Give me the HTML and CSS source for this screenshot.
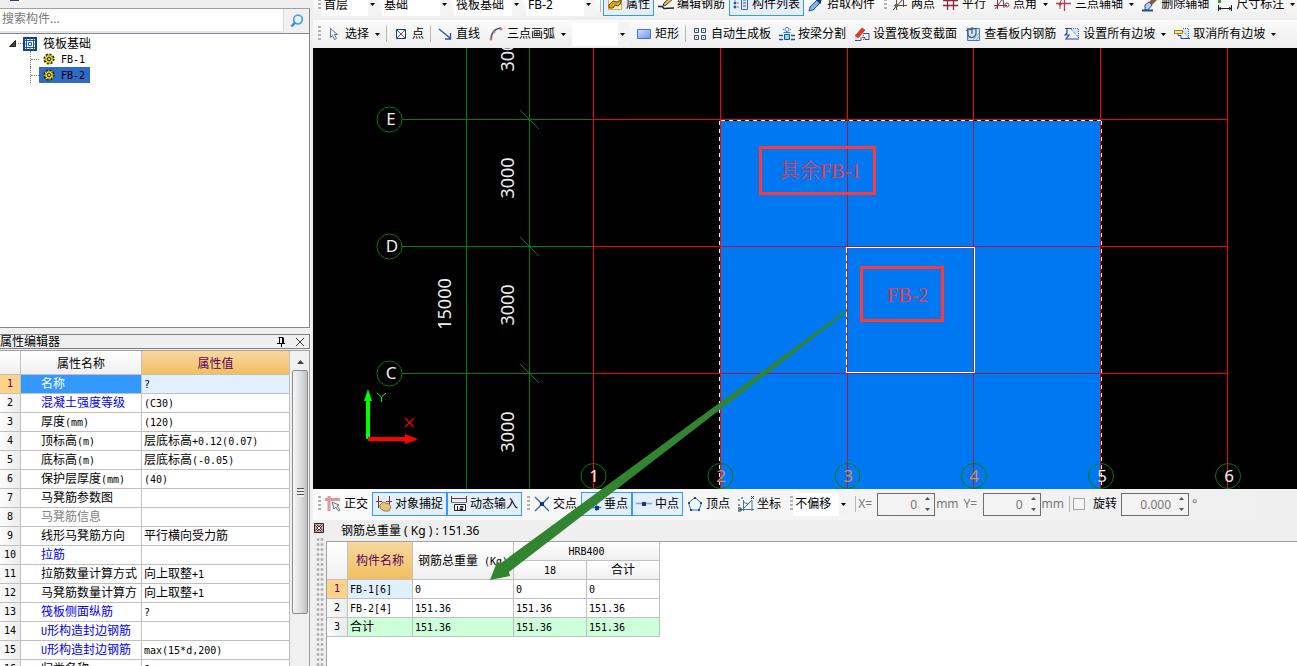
FILE: index.html
```html
<!DOCTYPE html>
<html lang="zh-CN">
<head>
<meta charset="utf-8">
<title>筏板基础</title>
<link rel="stylesheet" href="styles.css">
</head>
<body>
<svg class="defs" aria-hidden="true">
  <defs>
    <linearGradient id="blue" x1="0" y1="0" x2="1" y2="1"><stop offset="0" stop-color="#d3e2ff"/><stop offset="1" stop-color="#6d93e8"/></linearGradient>
    <symbol id="arrow" viewBox="0 0 5 3"><path d="M0 0h5L2.500 3z"/></symbol>
    <symbol id="gear" viewBox="0 0 12 12"><circle cx="6" cy="6" r="4.600" fill="#ffeb00" stroke="#222" stroke-width="2" stroke-dasharray="2 1.600"/><circle cx="6" cy="6" r="3.700" fill="#ffeb00"/><path d="M6 1v10M1 6h10M2.500 2.500l7 7M9.500 2.500l-7 7" stroke="#6c6400" stroke-width=".7"/><circle cx="6" cy="6" r="1.500" fill="#fff" stroke="#222"/></symbol>
  </defs>
</svg>
<div class="app">
  <aside class="side">
    <div class="side-top"><span class="tab-stub"></span></div>
    <form class="search">
      <input type="text" placeholder="搜索构件..." aria-label="搜索构件">
      <button type="button" aria-label="搜索"><svg width="14" height="14" viewBox="0 0 14 14"><circle cx="8" cy="5.500" r="4.300" fill="#eaf6ff" stroke="#4aa3e8" stroke-width="1.800"/><path d="M5 8.500L1.500 12.500" stroke="#3b8fd6" stroke-width="2.600"/></svg></button>
    </form>
    <div class="tree">
      <div class="node root">
        <svg class="twist" width="7" height="7" viewBox="0 0 7 7"><path d="M6.500 .5v6h-6z" fill="#444" stroke="#222"/></svg><i class="dots"></i>
        <svg width="14" height="14" viewBox="0 0 14 14"><path fill="#fff" stroke="#123f87" stroke-width="2" d="M1 1h12v12H1z"/><path d="M1 3.500h12M1 10.500h12M3.500 1v12M10.500 1v12M7 1v3M7 10v3M1 7h3M10 7h3M5.500 5.500h3v3h-3z" fill="none" stroke="#1c56a8"/></svg>
        <span>筏板基础</span>
      </div>
      <ul>
        <li><i class="dots"></i><span class="node leaf"><svg width="12" height="12"><use href="#gear"/></svg><span>FB-1</span></span></li>
        <li><i class="dots"></i><span class="node leaf on"><svg width="12" height="12"><use href="#gear"/></svg><span>FB-2</span></span></li>
      </ul>
    </div>
    <section class="props">
      <header><h2>属性编辑器</h2>
        <button type="button" aria-label="固定"><svg width="9" height="10" viewBox="0 0 9 10"><path d="M2.500 1v5M1.500 .5h5M0 6.500h8M4.500 6v4" stroke="#000" fill="none"/><path d="M5 1h2v5H5z"/></svg></button>
        <button type="button" aria-label="关闭"><svg width="8" height="8" viewBox="0 0 8 8"><path d="M0 0l8 8M8 0L0 8" stroke="#333"/></svg></button>
      </header>
      <div class="props-body">
        <table class="grid">
          <colgroup><col class="c-no"><col class="c-name"><col class="c-val"></colgroup>
          <thead><tr><th></th><th>属性名称</th><th class="gold">属性值</th></tr></thead>
          <tbody>
            <tr class="cur"><th>1</th><td>名称</td><td><b>?</b></td></tr>
            <tr class="key"><th>2</th><td>混凝土强度等级</td><td><b>(C30)</b></td></tr>
            <tr><th>3</th><td>厚度<b>(mm)</b></td><td><b>(120)</b></td></tr>
            <tr><th>4</th><td>顶标高<b>(m)</b></td><td>层底标高<b>+0.12(0.07)</b></td></tr>
            <tr><th>5</th><td>底标高<b>(m)</b></td><td>层底标高<b>(-0.05)</b></td></tr>
            <tr><th>6</th><td>保护层厚度<b>(mm)</b></td><td><b>(40)</b></td></tr>
            <tr><th>7</th><td>马凳筋参数图</td><td></td></tr>
            <tr class="off"><th>8</th><td>马凳筋信息</td><td></td></tr>
            <tr><th>9</th><td>线形马凳筋方向</td><td>平行横向受力筋</td></tr>
            <tr class="key"><th>10</th><td>拉筋</td><td></td></tr>
            <tr><th>11</th><td>拉筋数量计算方式</td><td>向上取整<b>+1</b></td></tr>
            <tr><th>12</th><td>马凳筋数量计算方</td><td>向上取整<b>+1</b></td></tr>
            <tr class="key"><th>13</th><td>筏板侧面纵筋</td><td><b>?</b></td></tr>
            <tr class="key"><th>14</th><td><b>U</b>形构造封边钢筋</td><td></td></tr>
            <tr class="key"><th>15</th><td><b>U</b>形构造封边钢筋</td><td><b>max(15*d,200)</b></td></tr>
            <tr><th>16</th><td>归类名称</td><td><b>?</b></td></tr>
          </tbody>
        </table>
        <div class="scroll"><svg class="up" width="7" height="4" viewBox="0 0 7 4"><path d="M0 4h7L3.500 0z" fill="#444"/></svg><div class="thumb"><i></i></div></div>
      </div>
    </section>
  </aside>

  <main class="work">
    <div class="bar top">
      <i class="grip"></i>
      <span class="combo short"><select aria-label="楼层"><option>首层</option></select><svg><use href="#arrow"/></svg></span>
      <span class="combo"><select aria-label="类别"><option>基础</option></select><svg><use href="#arrow"/></svg></span>
      <span class="combo"><select aria-label="构件类型"><option>筏板基础</option></select><svg><use href="#arrow"/></svg></span>
      <span class="combo"><select aria-label="构件"><option>FB-2</option></select><svg><use href="#arrow"/></svg></span>
      <i class="sep"></i>
      <button type="button" class="tool on"><svg class="ic" viewBox="0 0 16 16"><path d="M1.500 1.500h13v12h-13z" fill="#fff0d0" stroke="#f0a040"/><path d="M2 9l4-4 4 1 4-2v3l-3 3-3-1-2 3H2z" fill="#d9a520" stroke="#5d4a10"/></svg>属性</button>
      <button type="button" class="tool"><svg class="ic" viewBox="0 0 16 16"><path d="M0 10.500h4l2 2 10-.5" stroke="#222" stroke-width="1.600" fill="none"/><path d="M5 10l1-3 8-7 2 2-8 7z" fill="#e2c56a" stroke="#333"/></svg>编辑钢筋</button>
      <button type="button" class="tool on"><svg class="ic" viewBox="0 0 16 16"><path d="M1 2h2v2H1zM1 6h2v2H1zM1 10h2v2H1zM4 2h2M4 7h2M4 11h2" fill="#2d4f9e" stroke="#2d4f9e" stroke-width=".6"/><path d="M8.500 .5h6v13h-6z" fill="#dce8fb" stroke="#54688f"/><path d="M10 4h3M10 7h3M10 10h3" stroke="#3364b0"/></svg>构件列表</button>
      <button type="button" class="tool"><svg class="ic" viewBox="0 0 16 16"><path d="M1 15l1-4 7-7 3 3-7 7z" fill="#7db7ed" stroke="#245a9c"/><path d="M8 2l2 0 2-2h3v3l-2 2v2l-1 1-5-5z" fill="#173a73"/></svg>拾取构件</button>
      <i class="grip"></i>
      <button type="button" class="tool"><svg class="ic" viewBox="0 0 16 16"><path d="M4.500 0v14M11.500 0v11M2 9.500h13" stroke="#823848"/><path d="M1 14L13 1" stroke="#333"/><path d="M3 8h3v3H3z" fill="#2d8b31"/></svg>两点</button>
      <button type="button" class="tool"><svg class="ic" viewBox="0 0 16 16"><path d="M0 4.500h15M0 9.500h15M4.500 0v14M10.500 0v14" stroke="#8b2638" stroke-width="1.300"/></svg>平行</button>
      <button type="button" class="tool"><svg class="ic" viewBox="0 0 16 16"><path d="M3.500 0v13M0 9.500h13M1 13L10 1" stroke="#a02a3c"/><path d="M9 3l1 9" stroke="#345"/><circle cx="13" cy="9" r="2" fill="none" stroke="#c03030"/></svg>点角<svg class="dd"><use href="#arrow"/></svg></button>
      <button type="button" class="tool"><svg class="ic" viewBox="0 0 16 16"><path d="M0 7.500h15M8.500 0v15" stroke="#a04858" stroke-width="1.300"/><path d="M4 13V8q0-6 9-7" stroke="#c43030" fill="none"/><circle cx="4" cy="8" r="1.500" fill="#c43030"/></svg>三点辅轴<svg class="dd"><use href="#arrow"/></svg></button>
      <button type="button" class="tool"><svg class="ic" viewBox="0 0 16 16"><path d="M7 6l6-6 3 3-6 6z" fill="#8b5c3c"/><path d="M3 9l4-3 3 3-4 5H3z" fill="#b9cdf3" stroke="#3b4f83"/><path d="M0 14.500h11" stroke="#234f91" stroke-width="2"/></svg>删除辅轴</button>
      <button type="button" class="tool"><svg class="ic" viewBox="0 0 16 16"><path d="M1.500 9v6M14.500 9v6M2 12.500h12M4 11l-2 1.500L4 14M12 11l2 1.500-2 1.500" stroke="#222" fill="none"/><path d="M1 4h3v3H1z" fill="#29a329"/></svg>尺寸标注<svg class="dd"><use href="#arrow"/></svg></button>
    </div>

    <div class="bar draw">
      <i class="grip"></i>
      <button type="button" class="tool"><svg class="ic" viewBox="0 0 16 16"><path d="M4.500 2.500v9l2-2 2 4 2-1-2-4h3z" fill="#eef3fb" stroke="#5d7390"/></svg>选择<svg class="dd"><use href="#arrow"/></svg></button>
      <i class="sep"></i>
      <button type="button" class="tool"><svg class="ic" viewBox="0 0 16 16"><path d="M3.500 3.500h9v9h-9z" fill="#fff" stroke="#17377d"/><path d="M4 4l8 8M12 4l-8 8" stroke="#3763b5"/><path d="M7 7h2v2H7z" fill="#e22"/></svg>点</button>
      <i class="sep"></i>
      <button type="button" class="tool"><svg class="ic" viewBox="0 0 16 16"><path d="M2 3l11 9M13.500 7v6H8" stroke="#2a5798" stroke-width="1.400" fill="none"/></svg>直线</button>
      <button type="button" class="tool"><svg class="ic" viewBox="0 0 16 16"><path d="M3 14Q3 3 13 2" stroke="#3a5c92" stroke-width="1.400" fill="none"/><g fill="#fff" stroke="#d6543a"><circle cx="3" cy="13" r="1"/><circle cx="6" cy="6" r="1"/><circle cx="13" cy="3" r="1"/></g></svg>三点画弧<svg class="dd"><use href="#arrow"/></svg></button>
      <span class="combo short"><select aria-label="画法"><option></option></select><svg><use href="#arrow"/></svg></span>
      <button type="button" class="tool"><svg class="ic" viewBox="0 0 16 16"><path d="M1.500 3.500h13v9h-13z" fill="url(#blue)" stroke="#4a74d3"/></svg>矩形</button>
      <i class="sep"></i>
      <button type="button" class="tool"><svg class="ic" viewBox="0 0 16 16"><path d="M2.500 2.500h4v4h-4zM9.500 2.500h4v4h-4zM2.500 9.500h4v4h-4zM9.500 9.500h4v4h-4z" fill="#fff" stroke="#30466f"/><path d="M4 4h1v1H4zM11 4h1v1h-1zM4 11h1v1H4zM11 11h1v1h-1z" fill="#3c6fc9"/></svg>自动生成板</button>
      <button type="button" class="tool"><svg class="ic" viewBox="0 0 16 16"><path d="M0 9.500h4M12 9.500h4M0 13.500h4M12 13.500h4" stroke="#23509a" stroke-width="1.400"/><path d="M5.500 8.500h5v5h-5z" fill="#8fd4f1" stroke="#23509a"/><circle cx="8" cy="3.500" r="2" fill="#fff" stroke="#3b7ad1"/><path d="M4 3.500h1M11 3.500h1M4.500 6.500h7" stroke="#3b7ad1"/></svg>按梁分割</button>
      <button type="button" class="tool"><svg class="ic" viewBox="0 0 16 16"><path d="M1 10l7-8 3 2-7 8z" fill="#e33b29" stroke="#952718" stroke-width=".6"/><path d="M1 10l3 2-3 2z" fill="#f2d7b0"/><path d="M1 14.500h6v-3M8 11.500h3v2h4v-6h-5" fill="none" stroke="#2252a6"/><path d="M9.500 5v10" stroke="#e22" stroke-dasharray="1 1"/></svg>设置筏板变截面</button>
      <button type="button" class="tool"><svg class="ic" viewBox="0 0 16 16"><path d="M2.500 2.500h12v12h-12z" fill="#d2e6f8" stroke="#4f79a7"/><path d="M8 14l6-7M11 14l3-4M3 13l3-3" stroke="#88b4db"/><path d="M1 4.500l10-2v5q-1 4-4 4-4 0-4-4V3M7 1v7" fill="none" stroke="#435c77" stroke-width="1.200"/></svg>查看板内钢筋</button>
      <button type="button" class="tool"><svg class="ic" viewBox="0 0 16 16"><path d="M1 2.500h6M3 3v4l-2 2h4l-3 4h13" stroke="#1a4ca0" stroke-width="1.200" fill="none"/><path d="M6 3h9v9z" fill="#d6e7fb"/><path d="M7 2.500h7.500V12M7 3l8 9" stroke="#3a6cb5" stroke-dasharray="1 1" fill="none"/></svg>设置所有边坡<svg class="dd"><use href="#arrow"/></svg></button>
      <button type="button" class="tool"><svg class="ic" viewBox="0 0 16 16"><path d="M.5 4.500h8v3h-8z" fill="#ffe36a" stroke="#a77d18"/><path d="M8 3h7v9z" fill="#d6e7fb"/><path d="M9 2.500h5.500V12M8 4l7 8" stroke="#3a6cb5" stroke-dasharray="1 1" fill="none"/><path d="M4 8v1.500h3v3h9" stroke="#1a4ca0" fill="none"/></svg>取消所有边坡<svg class="dd"><use href="#arrow"/></svg></button>
    </div>

    <div class="canvas">
      <svg width="100%" height="100%" role="img" aria-label="筏板平面图">
        <g transform="translate(-313 -48)">
          <path fill="#0078f2" d="M721 121h380v600H721z"/>
          <path d="M402 119.500h191M402 246.500h191M402 373.500h191M466.500 48v600M529.500 48v600" stroke="#008000"/>
          <path d="M520 110l19 19M520 237l19 19M520 364l19 19" stroke="#008000"/>
          <g stroke="#f00"><path d="M593 119.500h634M593 246.500h634M593 373.500h634M593.500 48v441M720.500 48v441M847.500 48v441M973.500 48v441M1100.500 48v441M1227.500 48v441"/></g>
          <g stroke="#a81848"><path d="M721 246.500h380M721 373.500h380M847.500 121v368M973.500 121v368"/></g>
          <path d="M721 120.500h380M719.500 121v600M1101.500 121v600" stroke="#fff" stroke-dasharray="4 4"/>
          <path d="M846.500 247v126" stroke="#fff" stroke-dasharray="6 2"/>
          <path d="M847 247.500h127.500v125H847" stroke="#fff" fill="none"/>
          <g fill="none" stroke="#008000">
            <circle cx="389.500" cy="119.500" r="12.500"/><circle cx="389.500" cy="246.500" r="12.500"/><circle cx="389.500" cy="373.500" r="12.500"/>
            <circle cx="593.500" cy="476" r="12.500"/><circle cx="720.500" cy="476" r="12.500"/><circle cx="847.500" cy="476" r="12.500"/><circle cx="974" cy="476" r="12.500"/><circle cx="1101" cy="476" r="12.500"/><circle cx="1228" cy="476" r="12.500"/>
          </g>
          <g class="axis">
            <text x="391" y="125">E</text><text x="392" y="252">D</text><text x="391" y="379">C</text>
            <text x="594" y="482">1</text><text x="721" y="482" class="or">2</text><text x="848" y="482" class="or">3</text><text x="974" y="482" class="or">4</text><text x="1102" y="482">5</text><text x="1229" y="482">6</text>
            <text class="dim" transform="translate(514 51) rotate(-90)">3000</text>
            <text class="dim" transform="translate(514 178) rotate(-90)">3000</text>
            <text class="dim" transform="translate(514 305) rotate(-90)">3000</text>
            <text class="dim" transform="translate(514 432) rotate(-90)">3000</text>
            <text class="dim" transform="translate(451 304) rotate(-90)">15000</text>
          </g>
          <path d="M368 439v-40" stroke="#0f0" stroke-width="4"/><path d="M364 401l4-12 4 12z" fill="#0f0"/>
          <path d="M368 439h38" stroke="#f00" stroke-width="4"/><path d="M405 434l13 5-13 5z" fill="#f00"/>
          <path d="M377 393l4.500 4 4.500-4M381.500 397v5" stroke="#0f0" fill="none"/><path d="M405 418l9 9M414 418l-9 9" stroke="#f00" stroke-width="1.200"/>
          <g fill="none" stroke="#ff3838" stroke-width="3"><path d="M760.500 147.500h114v46h-114zM861.500 267.500h81v53h-81z"/></g>
          <g class="note"><text x="780" y="178">其余<tspan class="lat">FB-1</tspan></text><text x="887" y="302" class="lat">FB-2</text></g>
        </g>
      </svg>
    </div>

    <div class="bar snap">
      <i class="grip"></i>
      <button type="button" class="tool"><svg class="ic" viewBox="0 0 16 16"><path d="M0 3.500h15M4 0v15" stroke="#dc9b9b" stroke-width="3"/><path d="M7 6l2 7 1.500-2 3 4 1.500-1-3-4 2-1z" fill="#e8edf4" stroke="#6d7685"/></svg>正交</button>
      <button type="button" class="tool on"><svg class="ic" viewBox="0 0 16 16"><path d="M2.500 0v12M13.500 0v8M0 5.500h6M10 5.500h6" stroke="#7d3038"/><path d="M4 9l3-3 6 2 2 3-2 4H8l-4-3z" fill="#e4c479" stroke="#9a8040"/></svg>对象捕捉</button>
      <button type="button" class="tool on"><svg class="ic" viewBox="0 0 16 16"><path d="M.5 0v7M15.500 0v7M1 2.500h14" stroke="#7d3038"/><path d="M0 6.500h16" stroke="#777"/><path d="M3.500 8.500h11v6h-11z" fill="#fff" stroke="#222"/><path d="M6.500 10v4M9 10.500h3v1.500H9v1.500h3" stroke="#111" fill="none"/></svg>动态输入</button>
      <i class="grip"></i>
      <button type="button" class="tool"><svg class="ic" viewBox="0 0 16 16"><path d="M1 1l14 14M15 1L1 15" stroke="#2b5f9f" stroke-width="1.300"/><path d="M6 6h4v4H6z" fill="#0d398d"/></svg>交点</button>
      <button type="button" class="tool on"><svg class="ic" viewBox="0 0 16 16"><path d="M11.500 0v15M0 11.500h16" stroke="#4778b7" stroke-width="1.300"/><path d="M10 10h4v4h-4z" fill="#0d398d"/></svg>垂点</button>
      <button type="button" class="tool on"><svg class="ic" viewBox="0 0 16 16"><path d="M0 7.500h16" stroke="#7ba6d7" stroke-width="1.500"/><path d="M6 6h4v4H6z" fill="#0d398d"/></svg>中点</button>
      <button type="button" class="tool"><svg class="ic" viewBox="0 0 16 16"><path d="M8 1.500L14.500 7 12 14H4L1.500 7z" fill="#f3f9ff" stroke="#3a6ba8"/><path d="M7 1h2v2H7zM1 6h2v2H1zM13 6h2v2h-2zM3 13h2v2H3zM11 13h2v2h-2z" fill="#174a9a"/></svg>顶点</button>
      <button type="button" class="tool"><svg class="ic" viewBox="0 0 16 16"><path d="M5.500 4v11M1 13.500h15M5 6l5 2 4-4v11M5 13l5-5" stroke="#3976b6" fill="none"/><path d="M1 3v2M1 8v2M4 1v2M13 0l3 3M16 0l-3 3M0 12h3v3H0z" stroke="#334" fill="none"/></svg>坐标</button>
      <i class="grip"></i>
      <span class="combo short"><select aria-label="偏移方式"><option>不偏移</option></select><svg><use href="#arrow"/></svg></span>
      <i class="sep"></i>
      <label class="spin"><span class="pre">X=</span><span class="box"><input type="text" value="0" disabled><svg viewBox="0 0 5 14"><path d="M0 3h5L2.500 0zM0 11h5L2.500 14z"/></svg></span><span>mm</span></label>
      <label class="spin"><span class="pre">Y=</span><span class="box"><input type="text" value="0" disabled><svg viewBox="0 0 5 14"><path d="M0 3h5L2.500 0zM0 11h5L2.500 14z"/></svg></span><span>mm</span></label>
      <i class="sep"></i>
      <label class="check"><input type="checkbox">旋转</label>
      <label class="spin wide"><span class="box"><input type="text" value="0.000" disabled aria-label="旋转角度"><svg viewBox="0 0 5 14"><path d="M0 3h5L2.500 0zM0 11h5L2.500 14z"/></svg></span><span>°</span></label>
    </div>

    <section class="dock">
      <div class="rail"><button type="button" aria-label="关闭"><svg width="10" height="10" viewBox="0 0 10 10"><path d="M.5 .5h9v9h-9z" fill="#eaa" stroke="#422"/><path d="M2 2l6 6M8 2L2 8" stroke="#222" stroke-width="2.400"/><path d="M2 2l6 6M8 2L2 8" stroke="#fff"/></svg></button><i></i></div>
      <div class="dock-main">
        <p>钢筋总重量 ( Kg ) : 151.36</p>
        <div class="sheet">
          <table class="grid">
            <colgroup><col class="s-no"><col class="s-name"><col class="s-sum"><col class="s-w"><col class="s-w"></colgroup>
            <thead>
              <tr><th rowspan="2"></th><th rowspan="2" class="gold">构件名称</th><th rowspan="2">钢筋总重量<b> (Kg)</b></th><th colspan="2"><b>HRB400</b></th></tr>
              <tr><th><b>18</b></th><th>合计</th></tr>
            </thead>
            <tbody>
              <tr class="first"><th>1</th><td><b>FB-1[6]</b></td><td><b>0</b></td><td><b>0</b></td><td><b>0</b></td></tr>
              <tr><th>2</th><td><b>FB-2[4]</b></td><td><b>151.36</b></td><td><b>151.36</b></td><td><b>151.36</b></td></tr>
              <tr class="total"><th>3</th><td>合计</td><td><b>151.36</b></td><td><b>151.36</b></td><td><b>151.36</b></td></tr>
            </tbody>
          </table>
        </div>
      </div>
    </section>
    <svg class="pointer" width="360" height="272" viewBox="488 310 360 272" aria-hidden="true"><path d="M846 310L501 563l-4-1-7 18 20-4-1-4L847 312z" fill="#318530"/></svg>
  </main>
</div>
</body>
</html>
```
FILE: styles.css
```css
* { box-sizing: border-box; }
body {
  margin: 0;
  background: #efefef;
  color: #000;
  font: 12px/18px "Noto Sans", "Noto Sans CJK SC", sans-serif;
}
button, input, select { font: inherit; color: inherit; margin: 0; }
button { border: 0; background: none; padding: 0; }
svg { display: block; flex: none; }
b { font: 10px/1 "DejaVu Sans Mono", monospace; }
.defs { position: absolute; width: 0; height: 0; }

.app { display: grid; grid-template-columns: 313px minmax(0, 1fr); height: 100vh; overflow: hidden; }

/* left column */
.side { display: flex; flex-direction: column; min-height: 0; padding-right: 3px; }
.side-top { height: 8px; padding-left: 10px; }
.tab-stub { display: block; width: 9px; height: 1px; background: #345; }
.search { display: flex; height: 25px; border-top: 1px solid #a0a0a0; border-right: 1px solid #828790; }
.search input { flex: 1; min-width: 0; border: 0; border-right: 1px solid #d8dbe2; border-bottom: 2px solid #e3e6ea; padding: 0 2px 2px; background: #fff; }
.search input::placeholder { color: #777; opacity: 1; }
.search button { width: 25px; display: grid; place-items: center; background: #f1f1f1; }
.tree { flex: 0 0 295px; background: #fff; border: 1px solid #828790; border-left: 0; padding: 2px 0 0 9px; }
.node { display: flex; align-items: center; }
.root { height: 15px; }
.root > span { padding-left: 6px; }
.root .dots { width: 5px; height: 1px; margin-left: 2px; }
.dots { border-top: 1px dotted #808080; flex: none; }
.tree ul { list-style: none; margin: 0 0 0 21px; padding: 0; }
.tree li { display: flex; align-items: center; height: 16px; border-left: 1px dotted #808080; }
.tree li .dots { width: 8px; }
.leaf { height: 16px; width: 51px; padding: 0 4px; gap: 6px; font: 10px/16px "DejaVu Sans Mono", monospace; }
.leaf span { padding-top: 2px; }
.leaf.on { background: #316ac5; }

.props { flex: 1; min-height: 0; display: flex; flex-direction: column; margin-top: 6px; }
.props header { display: flex; align-items: center; gap: 10px; height: 15px; padding-right: 5px; border: 1px solid #808080; border-left: 0; }
.props h2 { flex: 1; margin: 0; font-size: 12px; line-height: 13px; font-weight: 400; }
.props-body { flex: 1; min-height: 0; display: flex; overflow: hidden; margin-top: 1px; border-top: 1px solid #a0a0a0; border-right: 1px solid #a0a0a0; }
.scroll { width: 17px; margin-left: 2px; background: #f1f1f1; padding: 9px 1px 0 0; }
.up { margin: 0 auto 6px; }
.thumb { height: 244px; border: 1px solid #8c8c8c; border-radius: 2px; background: linear-gradient(90deg, #f6f6f6, #d9dadc 60%, #bfc0c4); display: grid; place-items: center; }
.thumb i { width: 7px; height: 9px; background: repeating-linear-gradient(#555 0 1px, #eee 1px 3px); }

/* tables */
.grid { border-collapse: separate; border-spacing: 0; table-layout: fixed; background: #fff; }
.grid th, .grid td { height: 19px; padding: 0; border: 0 solid #c0c0c0; border-width: 0 1px 1px 0; line-height: 18px; font-weight: 400; white-space: nowrap; }
.grid td { padding-left: 2px; text-align: left; }
.grid th { background: linear-gradient(#fff, #f0f0f0); text-align: center; }
.grid tbody th { font: 10px/18px "DejaVu Sans Mono", monospace; background: linear-gradient(90deg, #fcfcfc, #ececec); }
.grid .gold { background: linear-gradient(#f8d8a0, #f1bf60); color: #600060; }
.grid b { white-space: pre; }
.props .grid { width: 290px; height: max-content; flex: none; }
.props .grid thead th { height: 24px; padding-top: 2px; }
.props td:nth-child(2) { padding-left: 20px; }
.c-no { width: 21px; }
.c-name { width: 121px; }
.c-val { width: 148px; }
.grid .cur th, .grid .first th { background: #ffd28a; color: #600060; }
.cur td { background: #e0f0ff; }
.cur td:nth-child(2) { background: #3399ff; color: #fff; }
.key td:nth-child(2) { color: #0000f0; }
.off td { color: #808080; }

/* toolbars */
.work { position: relative; display: flex; flex-direction: column; min-width: 0; min-height: 0; }
.bar { display: flex; flex: none; align-items: center; overflow: hidden; padding-left: 4px; white-space: nowrap; background: linear-gradient(#fbfbfb, #eee); }
.top { height: 20px; align-items: flex-end; padding-bottom: 4px; }
.draw { height: 28px; }
.snap { height: 31px; padding-bottom: 1px; background: linear-gradient(90deg, #fafafa, #efefef); }
.grip { flex: none; width: 3px; height: 16px; margin: 0 1px; background: repeating-linear-gradient(#b0b0b0 0 2px, transparent 2px 4px); }
.snap .grip { margin-right: 0; }
.tool + .grip { margin-left: 5px; }
.top .grip { margin-bottom: 5px; }
.sep { flex: none; width: 1px; height: 16px; margin: 0 2px; background: #b8b8b8; }
.top .sep { margin-bottom: 4px; }
.tool { flex: none; display: flex; align-items: center; height: 24px; padding: 0 3px; border: 1px solid transparent; line-height: 20px; }
.tool.on { background: #e4effb; border-color: #3399ff; }
.ic { width: 16px; height: 16px; margin-right: 3px; }
.dd { width: 5px; height: 3px; margin-left: 6px; }
.combo { position: relative; flex: none; width: 69px; height: 23px; margin-right: 3px; background: linear-gradient(90deg, #fff 58px, #f3f3f3 58px); }
.combo.short { width: 57px; background: linear-gradient(90deg, #fff 46px, #f3f3f3 46px); }
.draw .combo { margin-left: 2px; }
.combo select { appearance: none; width: 100%; height: 100%; border: 0; padding: 0 0 0 2px; background: transparent; }
.combo svg { position: absolute; right: 4px; top: 10px; width: 5px; height: 3px; pointer-events: none; }
.spin { display: flex; align-items: center; gap: 1px; color: #777; margin-right: 5px; }
.spin + .sep { margin-left: 0; }
.pre { min-width: 18px; }
.box { position: relative; display: block; width: 58px; height: 23px; border: 1px solid #6d6d6d; background: #f3f3f3; }
.box input { width: 100%; height: 100%; border: 0; padding: 0 17px 0 0; text-align: right; background: transparent; color: #777; }
.box svg { position: absolute; right: 4px; top: 3px; width: 5px; height: 14px; fill: #555; }
.wide { gap: 3px; }
.wide .box { width: 68px; }
.check { display: flex; align-items: center; gap: 8px; margin-right: 4px; }
.check input { appearance: none; width: 12px; height: 12px; margin-left: 1px; border: 1px solid #a5a5a5; background: #f5f5f5; }

/* drawing area */
.canvas { flex: 1; min-height: 0; background: #000; overflow: hidden; }
.axis text { font: 17px "Noto Sans", sans-serif; fill: #eee; text-anchor: middle; }
.axis .dim { font-size: 18px; }
.axis .or { fill: #d88a4c; }
.note text { font: 20px "Liberation Serif", "Noto Sans CJK SC", serif; font-weight: 300; fill: #ee3a48; }
.note .lat { font-family: "Liberation Serif", serif; }
.pointer { position: absolute; left: 175px; top: 310px; pointer-events: none; }

/* result panel */
.dock { flex: 0 0 146px; display: flex; min-height: 0; }
.rail { width: 13px; padding: 3px 2px 0 1px; display: flex; flex-direction: column; gap: 4px; }
.rail i { flex: 1; margin-left: 2px; background: radial-gradient(circle, #b5b5b5 1px, transparent 2px) 0 0 / 4px 5px; }
.dock-main { flex: 1; min-width: 0; display: flex; flex-direction: column; }
.dock p { margin: 0; padding: 1px 0 0 15px; height: 21px; line-height: 20px; }
.sheet { flex: 1; background: #fff; border-top: 1px solid #a0a0a0; border-left: 1px solid #a0a0a0; }
.sheet .grid { width: 333px; }
.s-no { width: 21px; }
.s-name { width: 65px; }
.s-sum { width: 101px; }
.s-w { width: 73px; }
.first td:nth-child(2) { background: #e0f0ff; }
.total td { background: #ccffda; }
```
